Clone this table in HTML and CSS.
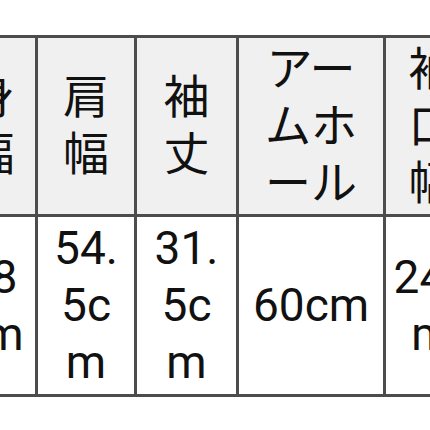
FILE: index.html
```html
<!DOCTYPE html>
<html lang="ja">
<head>
<meta charset="utf-8">
<link rel="stylesheet" href="styles.css">
</head>
<body>
<table class="size-table">
  <colgroup>
    <col class="c1">
    <col class="c2">
    <col class="c3">
    <col class="c4">
    <col class="c5">
  </colgroup>
  <tr class="head-row">
    <th>身幅</th>
    <th>肩幅</th>
    <th>袖丈</th>
    <th>アームホール</th>
    <th>袖口幅</th>
  </tr>
  <tr class="body-row">
    <td>58cm</td>
    <td>54.5cm</td>
    <td>31.5cm</td>
    <td>60cm</td>
    <td>24cm</td>
  </tr>
</table>
</body>
</html>
```
FILE: styles.css
```css
html, body {
  margin: 0;
  padding: 0;
  overflow: hidden;
  background: #ffffff;
}
body {
  width: 430px;
  height: 430px;
}
.size-table {
  width: 535px;
  margin-top: 35px;
  margin-left: -55px;
  border-collapse: separate;
  border-spacing: 0;
  table-layout: fixed;
  border-top: 3px solid #4c4c4c;
  border-left: 3px solid #4c4c4c;
  font-family: Roboto, "Noto Sans CJK JP", sans-serif;
  font-size: 46px;
  line-height: 57px;
  color: #111111;
}
.size-table th,
.size-table td {
  padding: 0 7px;
  border-right: 3px solid #4c4c4c;
  border-bottom: 3px solid #4c4c4c;
  text-align: center;
  vertical-align: middle;
  word-break: break-all;
  font-weight: 400;
}
.size-table th {
  background: #f0f0f0;
  height: 176px;
}
.size-table td {
  background: #ffffff;
  height: 177px;
}
.c1 { width: 90px; }
.c2 { width: 99px; }
.c3 { width: 102px; }
.c4 { width: 147px; }
.c5 { width: 94px; }
```
